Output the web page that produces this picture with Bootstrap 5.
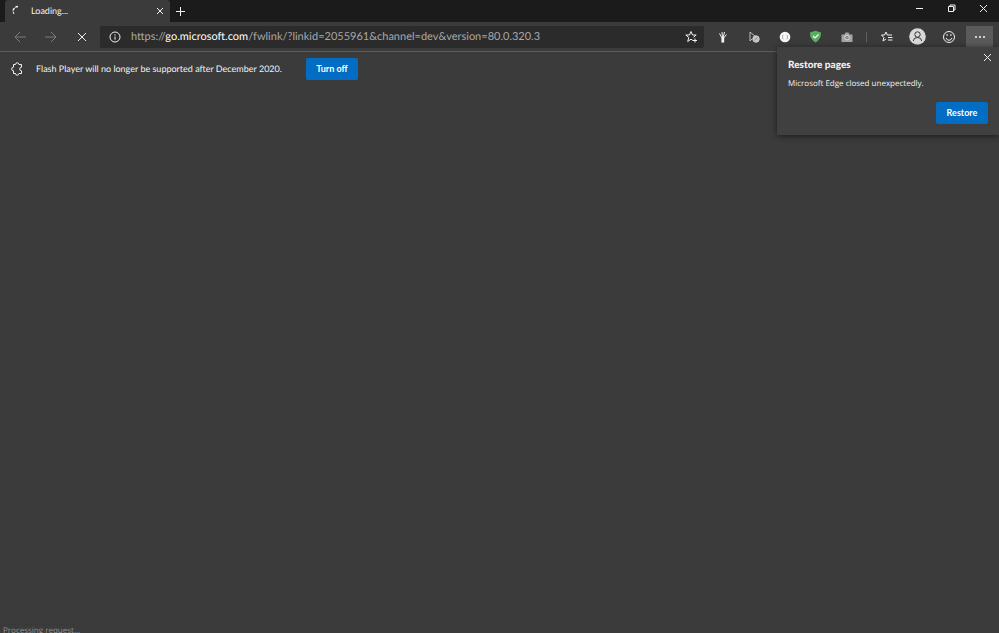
<!DOCTYPE html>
<html lang="en">
<head>
<meta charset="utf-8">
<meta name="viewport" content="width=device-width, initial-scale=1">
<title>Loading...</title>
<link href="https://cdn.jsdelivr.net/npm/bootstrap@5.3.0/dist/css/bootstrap.min.css" rel="stylesheet">
<style>
body{background:#3b3b3b;color:#f2f2f2;font-family:Lato,"Open Sans",sans-serif;font-size:9px;line-height:12px;text-rendering:geometricPrecision}
svg{display:block;fill:none;stroke:currentColor;stroke-width:1}
.tabstrip{background:#1b1b1b;height:22px}
.browser-tab{background:#3b3b3b;width:165px;margin-left:5px;padding:0 5px 0 6px;border-radius:3px 3px 0 0}
.plain{background:none;border:0;padding:0;color:inherit;display:flex;align-items:center;justify-content:center}
.win{width:32px;height:16px}
.toolbar{height:30px;border-bottom:1px solid #5c5c5c;padding:0 6px 0 4px}
.tool{width:31px;height:22px;flex:none}
.dim{color:#7d7d7d}
.address{background:#2b2b2b;height:22px;border-radius:2px;margin:0 3px;padding:0 6px 0 9px;min-width:0}
.url{color:#a8a8a8;font-size:11px;line-height:18px;text-decoration:none;margin-left:10px;white-space:nowrap;overflow:hidden}
.url strong{color:#fff;font-weight:400}
.more{width:27px;height:21px;background:#5a5a5a;margin-left:2px}
.divider{width:1px;height:10px;background:#606060;margin:0 4px}
.infobar{height:34px;padding-left:10px}
.action{background:#026dc2;color:#fff;border:0;border-radius:2px;font-size:9px;line-height:12px;font-weight:700;height:22px;min-width:52px;padding:0 8px}
.restore{top:47px;right:0;width:222px;background:#404040;padding:11px;box-shadow:0 1px 6px rgba(0,0,0,.55)}
.restore h1{font-size:10px;line-height:14px;font-weight:900;margin:0 0 6px}
.restore p{margin:0 0 12px}
.restore p,.status{font-family:"Open Sans","Noto Sans",sans-serif;font-size:8px}
.restore .close-popup{top:5px;right:6px;width:11px;height:11px}
.status{bottom:0;left:0;height:9px;width:332px;padding:0 3px;color:#929292;line-height:12px;overflow:hidden;border-top:1px solid #393939}
</style>
</head>
<body class="min-vh-100 position-relative overflow-hidden">
<header>
  <div class="tabstrip d-flex">
    <div class="browser-tab d-flex align-items-center">
      <svg width="12" height="12" viewBox="0 0 12 12" stroke="#c4c4c4"><path d="M2 5.500Q3 2 7 1.500" stroke-width="1.400" stroke-dasharray="3 1"/><path d="M2 6.500 3 9"/></svg>
      <span class="ms-2 flex-grow-1">Loading...</span>
      <button class="plain" aria-label="Close tab"><svg width="10" height="10" viewBox="0 0 10 10"><path d="m2 2 6 6M8 2 2 8"/></svg></button>
    </div>
    <button class="plain ms-1" aria-label="New tab"><svg width="13" height="13" viewBox="0 0 13 13" stroke="#a6a6a6"><path d="M6.500 2v9M2 6.500h9"/></svg></button>
    <div class="d-flex ms-auto">
      <button class="plain win" aria-label="Minimize"><svg width="9" height="9" viewBox="0 0 9 9"><path d="M1 4.500h7"/></svg></button>
      <button class="plain win" aria-label="Restore window"><svg width="9" height="9" viewBox="0 0 9 9"><path d="M1.500 2.500h5v5h-5zM3 2V1h5v5H7"/></svg></button>
      <button class="plain win" aria-label="Close window"><svg width="9" height="9" viewBox="0 0 9 9"><path d="m1 1 7 7M8 1 1 8"/></svg></button>
    </div>
  </div>
  <nav class="toolbar d-flex align-items-center" aria-label="Browser toolbar">
    <button class="plain tool dim" aria-label="Back"><svg width="14" height="14" viewBox="0 0 14 14"><path d="M13 7H2m5-5L2 7l5 5"/></svg></button>
    <button class="plain tool dim" aria-label="Forward"><svg width="14" height="14" viewBox="0 0 14 14"><path d="M1 7h11M7 2l5 5-5 5"/></svg></button>
    <button class="plain tool" aria-label="Stop"><svg width="12" height="12" viewBox="0 0 12 12"><path d="m2 2 8 8m0-8-8 8"/></svg></button>
    <div class="address d-flex align-items-center flex-grow-1">
      <svg width="12" height="12" viewBox="0 0 12 12" stroke="#d0d0d0"><circle cx="6" cy="6" r="5"/><path d="M6 5.500v3.200M6 3.300v1.200"/></svg>
      <a class="url flex-grow-1" href="https://go.microsoft.com/fwlink/?linkid=2055961&amp;channel=dev&amp;version=80.0.320.3">https://<strong>go.microsoft.com</strong>/fwlink/?linkid=2055961&amp;channel=dev&amp;version=80.0.320.3</a>
      <button class="plain" aria-label="Add to favorites"><svg width="14" height="14" viewBox="0 0 14 14" stroke="#b0b0b0"><path d="M9 10.500 7 9.200l-3.300 2.300 1.100-4L1.800 5h3.700L7 1.500 8.500 5h3.700L9.500 7.300M11 8.500v4M9 10.500h4"/></svg></button>
    </div>
    <button class="plain tool" aria-label="Hand extension"><svg width="12" height="14" viewBox="0 0 12 14" stroke="#999" stroke-width="1.200"><path d="M5 12.500V8L2.500 3.500M5.500 8l-.5-6M6 8l1.500-6M6.500 8 9.500 4.500"/><path d="M6 7v5.500" stroke-width="2.400"/></svg></button>
    <button class="plain tool" aria-label="Pointer extension"><svg width="14" height="14" viewBox="0 0 14 14"><path d="M3 2v9l2-2M3 2l6 5" stroke="#bbb"/><circle cx="9" cy="9" r="3.200" fill="#c4c4c4" stroke="#d0d0d0"/><path d="m7.500 10.500 3-3" stroke="#888"/></svg></button>
    <button class="plain tool" aria-label="Code extension"><svg width="12" height="12" viewBox="0 0 12 12"><circle cx="6" cy="6" r="5.300" fill="#f7f7f7" stroke="none"/><path d="M4.500 4Q3.200 4 3.500 6q-.3 2 1 2M7.500 4Q8.800 4 8.500 6q.3 2-1 2" stroke="#999" stroke-width=".8"/></svg></button>
    <button class="plain tool" aria-label="Shield extension"><svg width="13" height="13" viewBox="0 0 13 13"><path d="M1 2.500 6.500.8 12 2.500Q12.300 9 6.500 12.500.7 9 1 2.500Z" fill="#58ad62" stroke="none"/><path d="m4 6 2 2 3.500-3.500" stroke="#fff" stroke-width="1.100"/></svg></button>
    <button class="plain tool" aria-label="Camera extension"><svg width="12" height="12" viewBox="0 0 12 12"><path d="M.5 3.500h3l1-2h3l1 2h3v7.500H.5z" fill="#a5a5a5" stroke="none"/><circle cx="6" cy="6.700" r="2.200" fill="#555" stroke="#f0f0f0"/><circle cx="6" cy="6.700" r=".7" fill="#fff" stroke="none"/></svg></button>
    <span class="divider"></span>
    <button class="plain tool" aria-label="Favorites"><svg width="14" height="14" viewBox="0 0 14 14"><path d="m6 9-3 2 .8-3.500L1.500 5h3L6 2l1.300 3H12M8 7.500h4.500M8 10h4.500"/></svg></button>
    <button class="plain tool" aria-label="Profile"><svg width="17" height="17" viewBox="0 0 17 17"><circle cx="8.500" cy="8.500" r="8.300" fill="#d9d9d9" stroke="none"/><g stroke="#333"><circle cx="8.500" cy="6.500" r="2.700"/><path d="M4.300 13Q4.500 9.500 8.500 9.500t4.200 3.500"/></g></svg></button>
    <button class="plain tool" aria-label="Feedback"><svg width="14" height="14" viewBox="0 0 14 14"><circle cx="7" cy="7" r="5.500"/><path d="M4 8q.8 2.300 3 2.300T10 8"/><path d="M4.500 5h1.300M8.200 5h1.300" stroke-width="1.400"/></svg></button>
    <button class="plain more" aria-label="More"><svg width="12" height="4" viewBox="0 0 12 4" fill="#e6e6e6" stroke="none"><circle cx="2" cy="2" r=".7"/><circle cx="6" cy="2" r=".7"/><circle cx="10" cy="2" r=".7"/></svg></button>
  </nav>
</header>
<main>
  <div class="infobar d-flex align-items-center">
    <svg width="14" height="14" viewBox="0 0 14 14" stroke-width="1.300"><path d="M3.500 2.500h2a1.700 1.700 0 0 1 3.400 0h2.600v2.700a1.500 1.500 0 0 0 0 3.600v2.700H8.900a1.700 1.700 0 0 1-3.400 0h-2V8.800a1.800 1.800 0 1 1 0-3.600Z"/></svg>
    <span class="ms-2 ps-1">Flash Player will no longer be supported after December 2020.</span>
    <button class="action ms-4">Turn off</button>
  </div>
</main>
<section class="restore position-absolute" aria-labelledby="restore-title">
  <button class="plain close-popup position-absolute" aria-label="Dismiss"><svg width="9" height="9" viewBox="0 0 9 9"><path d="m1 1 7 7M8 1 1 8"/></svg></button>
  <h1 id="restore-title">Restore pages</h1>
  <p>Microsoft Edge closed unexpectedly.</p>
  <div class="text-end"><button class="action">Restore</button></div>
</section>
<div class="status position-absolute" role="status">Processing request...</div>
<script src="https://cdn.jsdelivr.net/npm/bootstrap@5.3.0/dist/js/bootstrap.bundle.min.js"></script>
</body>
</html>
